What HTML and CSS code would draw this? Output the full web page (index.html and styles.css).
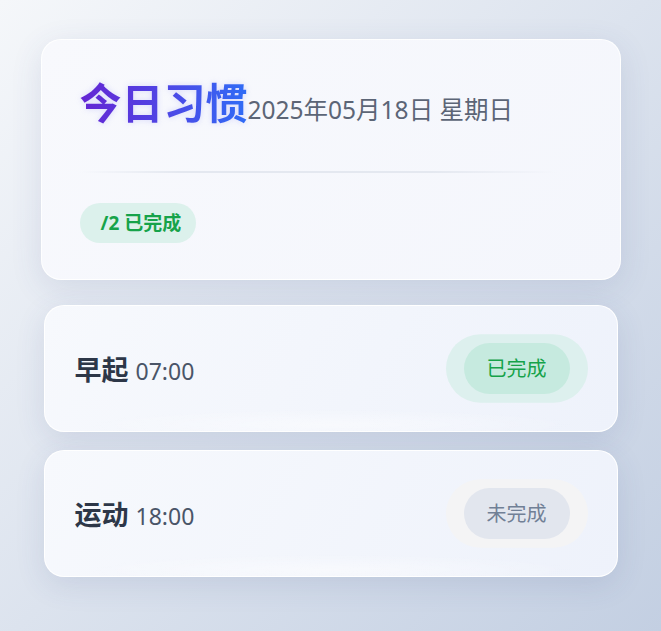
FILE: index.html
```html
<!DOCTYPE html>
<html lang="zh-CN">
<head>
    <meta charset="UTF-8">
    <meta name="viewport" content="width=device-width, initial-scale=1.0">
    <title>今日习惯</title>
    <link rel="stylesheet" href="styles.css">
</head>
<body>
    <div class="app">
        <header class="summary-card">
            <div class="summary-head">
                <h1 class="title">今日习惯</h1>
                <span class="date">2025年05月18日 星期日</span>
            </div>
            <div class="divider"></div>
            <span class="progress"><span class="done-count"></span>/2 已完成</span>
        </header>

        <ul class="habit-list">
            <li class="habit-card">
                <div class="habit-info">
                    <span class="habit-name">早起</span>
                    <span class="habit-time">07:00</span>
                </div>
                <a class="status-btn done">已完成</a>
            </li>
            <li class="habit-card">
                <div class="habit-info">
                    <span class="habit-name">运动</span>
                    <span class="habit-time">18:00</span>
                </div>
                <a class="status-btn pending">未完成</a>
            </li>
        </ul>
    </div>
</body>
</html>
```

FILE: styles.css
```css
*,
*:before,
*:after{
    box-sizing: border-box;
}
html{
    min-height: 100%;
    background: linear-gradient(135deg, #f5f7fa 0%, #c3cfe2 100%);
}
body{
    margin: 0;
    min-height: 631px;
    font-family: "Noto Sans", "Noto Sans CJK SC", sans-serif;
    color: #2d3748;
}
ul{
    list-style: none;
    padding: 0;
    margin: 0;
}
a{
    display: block;
    cursor: pointer;
    text-decoration: none;
}

.app{
    max-width: 580px;
    margin: 0 auto;
    padding-top: 39px;
}

/* 顶部汇总卡片 */
.summary-card{
    display: flex;
    flex-direction: column;
    align-items: flex-start;
    padding: 38px 38px 36px;
    border-radius: 20px;
    background: linear-gradient(135deg, #f8f9fd 0%, #f4f6fc 100%);
    border: 1px solid rgba(255,255,255,.9);
    box-shadow: 0 8px 32px rgba(60,72,130,.12);
}
.summary-head{
    display: flex;
    align-items: baseline;
}
.title{
    margin: 0;
    font-size: 42px;
    line-height: 50px;
    font-weight: 700;
    background: linear-gradient(90deg, #6425d3 0%, #4f46e5 50%, #2f6cf6 100%);
    -webkit-background-clip: text;
    background-clip: text;
    color: transparent;
    filter: drop-shadow(0 0 3px rgba(99,102,241,.22));
}
.date{
    font-size: 24.5px;
    color: #5c6576;
}
.divider{
    align-self: stretch;
    height: 2px;
    margin: 43px 0 30px;
    background: linear-gradient(90deg, transparent, #e4e8f0 20%, #e4e8f0 70%, transparent 95%);
}
.progress{
    display: block;
    height: 40px;
    line-height: 40px;
    padding: 0 15px 0 18px;
    border-radius: 20px;
    background: #dcf1ec;
    color: #16a34a;
    font-size: 19px;
    font-weight: 700;
}
.done-count{
    display: inline-block;
    width: 3px;
}

/* 习惯列表 */
.habit-list{
    display: flex;
    flex-direction: column;
    gap: 18px;
    margin: 25px 3px 0;
}
.habit-card{
    position: relative;
    z-index: 0;
    display: flex;
    align-items: center;
    justify-content: space-between;
    padding: 37px 30px;
    border-radius: 20px;
    border: 1px solid rgba(255,255,255,.95);
    background:
        radial-gradient(ellipse 42% 12% at 50% 95%, rgba(255,255,255,.45), rgba(255,255,255,0) 100%),
        linear-gradient(120deg, #f7f9fd 0%, #eef2fb 100%);
    box-shadow: 0 8px 30px rgba(60,72,130,.12);
}
.habit-info{
    display: flex;
    align-items: baseline;
    gap: 7px;
}
.habit-name{
    font-size: 27px;
    font-weight: 700;
    color: #2d3748;
}
.habit-time{
    font-size: 23px;
    color: #4a5568;
}

/* 状态按钮，外圈为脉冲光环 */
.status-btn{
    position: relative;
    height: 51px;
    line-height: 51px;
    padding: 0 23px;
    margin-right: 17px;
    border-radius: 26px;
    font-size: 20px;
}
.status-btn:before{
    content: "";
    position: absolute;
    z-index: -1;
    top: 0;
    left: 0;
    width: 100%;
    height: 100%;
    border-radius: 26px;
    transform: scale(1.34);
}
.status-btn.done{
    background: #c6eadf;
    color: #16a34a;
}
.status-btn.done:before{
    background: #ddf0ee;
}
.status-btn.pending{
    background: #e2e6ee;
    color: #718096;
}
.status-btn.pending:before{
    background: #f4f4f5;
}
```
